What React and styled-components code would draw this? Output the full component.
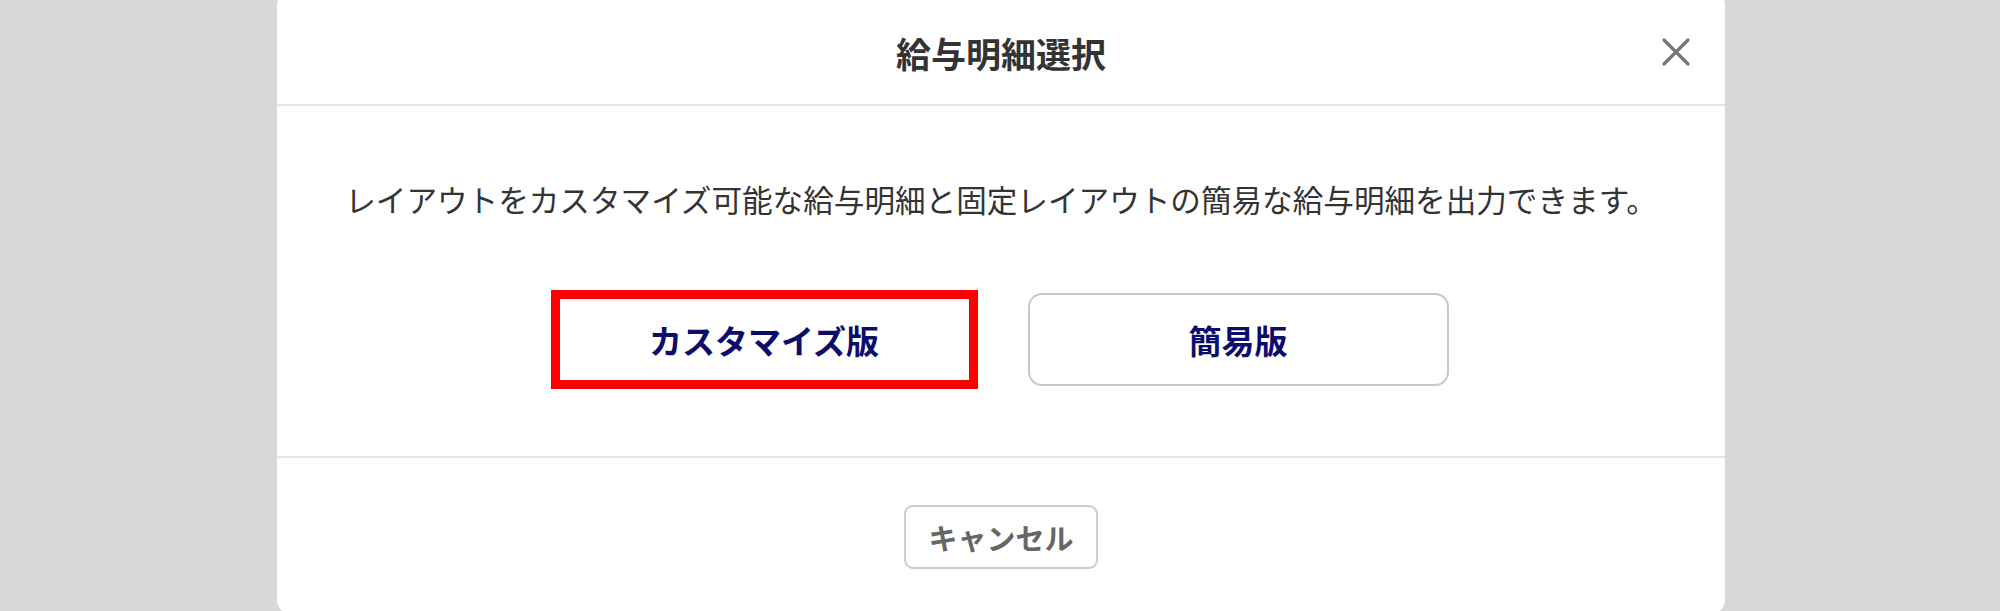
import React from 'react';
import styled, { createGlobalStyle } from 'styled-components';

// ページ全体の基本スタイル
const GlobalStyle = createGlobalStyle`
  html, body {
    margin: 0;
    padding: 0;
    background: #d8d8d8;
    font-family: "Noto Sans CJK JP", "Noto Sans", sans-serif;
  }
`;

const Page = styled.div`
  height: 611px;
  overflow: hidden;
  display: flex;
  justify-content: center;
`;

// 背後のヘッダーの金色が角から少し見える
const Frame = styled.div`
  width: 1448px;
  margin-left: 2px;
  background: linear-gradient(#c9a23a 0 6px, transparent 6px);
`;

const Modal = styled.div`
  margin-top: -10px;
  background: #fff;
  border-radius: 14px;
  display: flex;
  flex-direction: column;
`;

const Header = styled.div`
  display: grid;
  grid-template-columns: 1fr auto 1fr;
  align-items: center;
  height: 116px;
  padding: 0 35px;
  border-bottom: 2px solid #e5e5e5;
  box-sizing: border-box;
`;

const Title = styled.h2`
  grid-column: 2;
  margin: 10px 0 0;
  font-size: 35px;
  font-weight: 700;
  color: #333;
`;

const CloseButton = styled.button`
  grid-column: 3;
  justify-self: end;
  margin-top: 10px;
  width: 28px;
  height: 28px;
  padding: 0;
  border: none;
  background: none;
  cursor: pointer;
  display: flex;
  align-items: center;
  justify-content: center;
`;

const Body = styled.div`
  padding: 73px 0 70px;
  border-bottom: 2px solid #e5e5e5;
  display: flex;
  flex-direction: column;
  align-items: center;
  gap: 74px;
`;

const Description = styled.p`
  margin: 0;
  font-size: 30.6px;
  line-height: 40px;
  color: #333;
`;

const ButtonRow = styled.div`
  display: flex;
  gap: 53px;
`;

const ChoiceButton = styled.button`
  width: 421px;
  height: 93px;
  box-sizing: border-box;
  background: #fff;
  font-family: inherit;
  font-size: 33px;
  font-weight: 700;
  color: #0c0c6c;
  cursor: pointer;
  border: ${({ highlighted }) => (highlighted ? '6px solid #ff0000' : '2px solid #c8c8c8')};
  border-radius: ${({ highlighted }) => (highlighted ? '0' : '14px')};
  box-shadow: ${({ highlighted }) => (highlighted ? '0 0 0 3px #ff0000' : 'none')};
`;

const Footer = styled.div`
  padding: 47px 0 45px;
  display: flex;
  justify-content: center;
`;

const CancelButton = styled.button`
  width: 194px;
  height: 64px;
  box-sizing: border-box;
  background: #fff;
  border: 2px solid #cccccc;
  border-radius: 9px;
  font-family: inherit;
  font-size: 29px;
  font-weight: 700;
  color: #666;
  cursor: pointer;
`;

const App = () => {
    return (
        <Page>
            <GlobalStyle />
            <Frame>
                <Modal>
                    <Header>
                        <Title>給与明細選択</Title>
                        <CloseButton aria-label="閉じる">
                            <svg width="28" height="28" viewBox="0 0 28 28">
                                <path d="M2 2 L26 26 M26 2 L2 26" stroke="#777" strokeWidth="3.2" strokeLinecap="round" />
                            </svg>
                        </CloseButton>
                    </Header>
                    <Body>
                        <Description>
                            レイアウトをカスタマイズ可能な給与明細と固定レイアウトの簡易な給与明細を出力できます。
                        </Description>
                        <ButtonRow>
                            <ChoiceButton highlighted>カスタマイズ版</ChoiceButton>
                            <ChoiceButton>簡易版</ChoiceButton>
                        </ButtonRow>
                    </Body>
                    <Footer>
                        <CancelButton>キャンセル</CancelButton>
                    </Footer>
                </Modal>
            </Frame>
        </Page>
    );
};

export default App;
